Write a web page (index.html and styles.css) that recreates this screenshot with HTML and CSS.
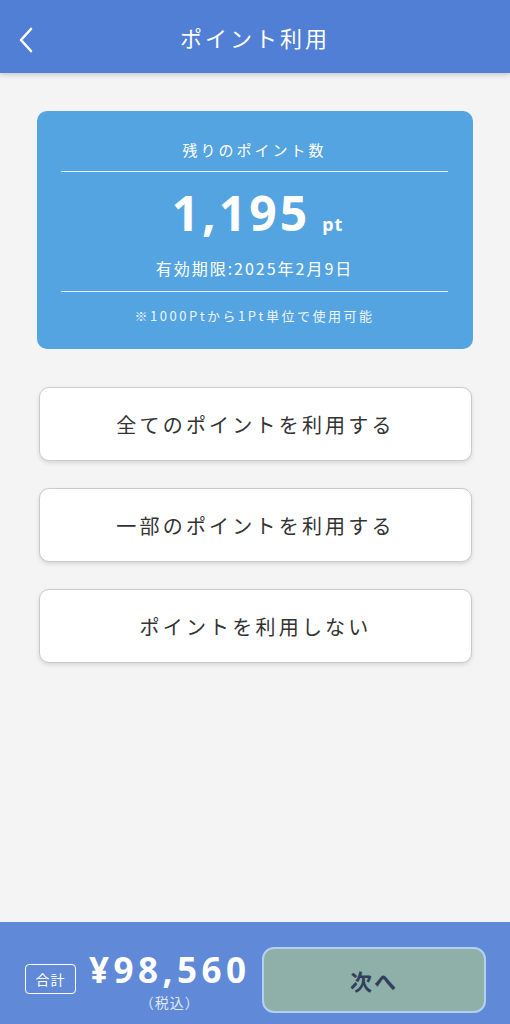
FILE: index.html
```html
<!DOCTYPE html>
<html lang="ja">
<head>
    <meta charset="UTF-8">
    <meta name="viewport" content="width=device-width, initial-scale=1.0">
    <title>ポイント利用</title>
    <link rel="stylesheet" href="styles.css">
</head>
<body>
    <div class="app">
        <header class="topbar">
            <button class="back" aria-label="戻る">
                <svg width="16" height="26" viewBox="0 0 16 26">
                    <path d="M13 2 L3 13 L13 24" fill="none" stroke="#fff" stroke-width="2.6" stroke-linecap="round" stroke-linejoin="round"/>
                </svg>
            </button>
            <h1>ポイント利用</h1>
        </header>

        <main class="content">
            <section class="point-card">
                <p class="point-card__title">残りのポイント数</p>
                <hr class="point-card__rule">
                <p class="point-card__value">1,195<span class="unit">pt</span></p>
                <p class="point-card__expire">有効期限:2025年2月9日</p>
                <hr class="point-card__rule rule-bottom">
                <p class="point-card__note">※1000Ptから1Pt単位で使用可能</p>
            </section>

            <div class="choices">
                <button class="choice">全てのポイントを利用する</button>
                <button class="choice">一部のポイントを利用する</button>
                <button class="choice">ポイントを利用しない</button>
            </div>
        </main>

        <footer class="bottombar">
            <div class="total">
                <span class="total__label">合計</span>
                <div class="total__amount">
                    <span class="price">¥98,560</span>
                    <span class="tax">（税込）</span>
                </div>
            </div>
            <button class="next">次へ</button>
        </footer>
    </div>
</body>
</html>
```

FILE: styles.css
```css
body {
    margin: 0;
    padding: 0;
    background-color: #f4f4f4;
    font-family: 'Noto Sans CJK JP', 'Noto Sans', sans-serif;
    color: #333;
}
.app {
    width: 510px;
    height: 1024px;
    display: flex;
    flex-direction: column;
    overflow: hidden;
}
.topbar {
    position: relative;
    height: 73px;
    flex-shrink: 0;
    background: #527fd6;
    display: flex;
    align-items: center;
    justify-content: center;
    box-shadow: 0 2px 5px rgba(0, 0, 0, 0.18);
    z-index: 1;
}
.topbar h1 {
    margin: 0;
    font-size: 22px;
    font-weight: 400;
    letter-spacing: 3px;
    color: #fff;
}
.back {
    position: absolute;
    left: 18px;
    top: 27px;
    padding: 0;
    border: none;
    background: none;
    line-height: 0;
}
.content {
    flex: 1;
    padding: 38px 37px 0;
}
.point-card {
    background: #55a4e2;
    border-radius: 10px;
    padding: 28px 25px 23px 24px;
    color: #fff;
    text-align: center;
}
.point-card p {
    margin: 0;
}
.point-card__title {
    font-size: 15px;
    line-height: 22px;
    letter-spacing: 3px;
}
.point-card__rule {
    margin: 10px 0 0;
    border: none;
    border-top: 1px solid #e6f1fb;
}
.point-card__value {
    margin-top: 13px !important;
    height: 56px;
    display: flex;
    justify-content: center;
    align-items: baseline;
    font-family: 'Noto Sans', sans-serif;
    font-size: 48px;
    font-weight: 700;
    line-height: 56px;
    letter-spacing: 3px;
    padding-left: 6px;
}
.point-card__value .unit {
    font-size: 18px;
    line-height: 20px;
    letter-spacing: 1px;
    margin-left: 12px;
}
.point-card__expire {
    margin-top: 16px !important;
    font-size: 16px;
    line-height: 22px;
    letter-spacing: 2px;
}
.rule-bottom {
    margin-top: 12px;
}
.point-card__note {
    margin-top: 14px !important;
    font-size: 13px;
    line-height: 20px;
    letter-spacing: 2.5px;
    color: #eef5fc;
}
.choices {
    display: flex;
    flex-direction: column;
    gap: 27px;
    margin: 38px 1px 0 2px;
}
.choice {
    height: 74px;
    background: #fff;
    border: 1.5px solid #cacaca;
    border-radius: 10px;
    box-shadow: 0 2px 4px rgba(0, 0, 0, 0.12);
    font-family: 'Noto Sans CJK JP', sans-serif;
    font-size: 20px;
    letter-spacing: 3.2px;
    color: #333;
}
.bottombar {
    height: 102px;
    flex-shrink: 0;
    background: #608ad8;
    display: flex;
    align-items: flex-start;
    padding: 25px 24px 0 25px;
    box-sizing: border-box;
}
.total {
    display: flex;
    align-items: flex-start;
    margin-top: 4px;
    color: #fff;
}
.total__label {
    margin-top: 13px;
    width: 51px;
    height: 30px;
    box-sizing: border-box;
    border: 1px solid #fff;
    border-radius: 4px;
    font-size: 14px;
    line-height: 28px;
    text-align: center;
    letter-spacing: 1px;
}
.total__amount {
    margin-left: 13px;
    display: flex;
    flex-direction: column;
    align-items: center;
}
.price {
    font-family: 'Noto Sans', sans-serif;
    font-size: 35px;
    font-weight: 700;
    line-height: 38px;
    letter-spacing: 4.5px;
}
.tax {
    margin-top: 5px;
    font-size: 14px;
    line-height: 16px;
    letter-spacing: 1px;
    color: #dfe7f7;
}
.next {
    margin-left: auto;
    width: 224px;
    height: 66px;
    background: #8fb0a9;
    border: 2px solid #b3d0ee;
    border-radius: 12px;
    font-family: 'Noto Sans CJK JP', sans-serif;
    font-size: 22px;
    font-weight: 700;
    letter-spacing: 2px;
    color: #2f3f5c;
}
```
